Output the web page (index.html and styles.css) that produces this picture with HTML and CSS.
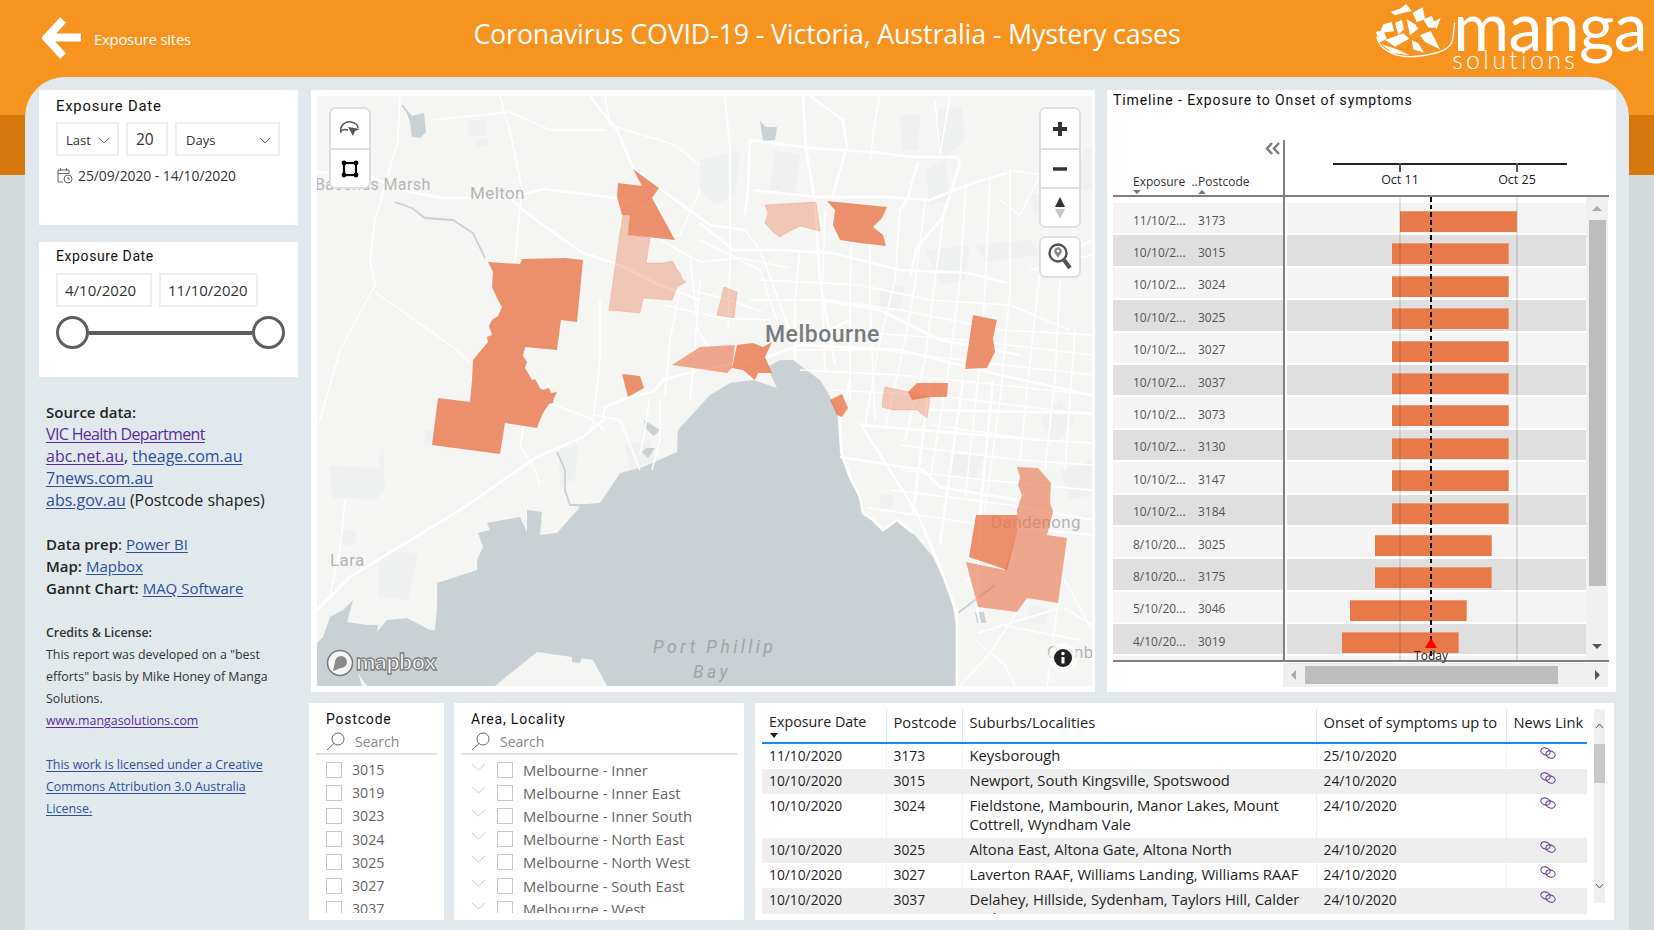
FILE: index.html
```html
<!DOCTYPE html>
<html lang="en">
<head>
<meta charset="utf-8">
<title>Coronavirus COVID-19 - Victoria, Australia - Mystery cases</title>
<link rel="stylesheet" href="styles.css">
</head>
<body>
<div class="page">
  <header class="top">
    <a class="back">
      <svg class="back-arrow" width="40" height="44" viewBox="0 0 40 44"><path d="M21 3 L4.500 21 L21 39 M5 20.500 H39" fill="none" stroke="#fff" stroke-width="8"/></svg>
      <span>Exposure sites</span>
    </a>
    <h1 class="title">Coronavirus COVID-19 - Victoria, Australia - Mystery cases</h1>
    <div class="logo">
      <svg class="logo-mark" width="88" height="62" viewBox="228 8 264 186">
        <g fill="#fff">
          <polygon points="272,38 300,28 318,14 335,35 305,42 285,48"/>
          <polygon points="338,40 368,24 375,60 350,68"/>
          <polygon points="370,60 395,50 412,85 385,85"/>
          <polygon points="398,70 422,55 410,90"/>
          <polygon points="285,70 305,62 312,90 295,106"/>
          <polygon points="250,75 275,68 282,96 240,100"/>
          <polygon points="228,98 250,92 260,118 238,130"/>
          <polygon points="320,60 345,75 355,88 330,108"/>
          <polygon points="360,108 392,95 420,150 375,128"/>
          <polygon points="255,122 310,102 328,118 285,142"/>
          <polygon points="245,135 290,150 330,168 275,160"/>
          <polygon points="335,122 355,132 372,160 340,150"/>
        </g>
        <path d="M230 112 C240 160 300 178 360 170 C420 162 452 150 458 120 L464 70" fill="none" stroke="#fff" stroke-width="4"/>
      </svg>
      <div class="logo-word">
        <span class="logo-manga">manga</span>
        <span class="logo-sol">solutions</span>
      </div>
    </div>
  </header>

  <main class="board">
    <aside class="side">
      <section class="card">
        <h2 class="card-title big">Exposure Date</h2>
        <div class="box-row">
          <div class="box box-last">Last<svg class="chev" width="12" height="7" viewBox="0 0 12 7"><path d="M1 1 L6 6 L11 1"/></svg></div>
          <div class="box box-num">20</div>
          <div class="box box-days">Days<svg class="chev" width="12" height="7" viewBox="0 0 12 7"><path d="M1 1 L6 6 L11 1"/></svg></div>
        </div>
        <div class="range">
          <svg width="16" height="17" viewBox="0 0 16 17" class="cal"><path d="M1 15 V3 H12 V7 M1 6.500 H12 M3.500 1 V4 M9.500 1 V4 M1 15 H6" fill="none" stroke="#666"/><circle cx="11" cy="12" r="4" fill="#fff" stroke="#666"/><path d="M11 10 V12 H13" fill="none" stroke="#666"/></svg>
          <span>25/09/2020 - 14/10/2020</span>
        </div>
      </section>
      <section class="card card-two">
        <h2 class="card-title">Exposure Date</h2>
        <div class="box-row">
          <div class="box box-date">4/10/2020</div>
          <div class="box box-date">11/10/2020</div>
        </div>
        <div class="slider"><span class="knob"></span><span class="track"></span><span class="knob"></span></div>
      </section>
      <div class="notes">
        <p class="src"><b>Source data:</b><br>
        <a class="seen tight">VIC Health Department</a><br>
        <a class="seen">abc.net.au</a>, <a>theage.com.au</a><br>
        <a>7news.com.au</a><br>
        <a>abs.gov.au</a> (Postcode shapes)</p>
        <p><b>Data prep</b>: <a>Power BI</a><br>
        <b>Map:</b> <a>Mapbox</a><br>
        <b>Gannt Chart:</b> <a>MAQ Software</a></p>
        <p class="small"><b>Credits &amp; License:</b><br>
        This report was developed on a "best efforts" basis by Mike Honey of Manga Solutions.<br>
        <a class="seen">www.mangasolutions.com</a></p>
        <p class="small"><a>This work is licensed under a Creative Commons Attribution 3.0 Australia License.</a></p>
      </div>
    </aside>

    <div class="content">
      <div class="upper">
        <section class="map-card">
          <div class="map">
            <svg class="map-svg" width="775" height="590" viewBox="317 96 775 590">
              <rect class="land" x="317" y="96" width="775" height="590"/>
              <g class="park">
                <polygon points="468,120 486,120 486,136 468,136"/>
                <polygon points="475,140 488,138 488,146 475,147"/>
                <polygon points="1085,150 1092,150 1092,190 1075,190 1080,165"/>
                <polygon points="900,115 920,115 918,150 902,150"/>
                <polygon points="938,110 962,106 965,140 945,158 938,140"/>
                <polygon points="925,170 945,160 950,200 930,205"/>
                <polygon points="700,160 740,150 735,195 715,205 700,190"/>
                <polygon points="775,150 800,155 795,195 770,190"/>
                <polygon points="925,250 970,245 965,280 940,285"/>
                <polygon points="975,245 1030,240 1040,255 985,262"/>
                <polygon points="880,290 905,285 900,310 880,308"/>
                <polygon points="330,466 380,468 378,500 332,498"/>
                <polygon points="380,456 383,445 385,490 375,498"/>
                <polygon points="380,552 418,553 408,600 378,597"/>
                <polygon points="340,530 356,530 356,545 340,545"/>
                <polygon points="425,430 443,430 443,445 425,445"/>
                <polygon points="558,450 578,445 575,480 560,485"/>
                <polygon points="625,445 650,440 655,460 630,470"/>
                <polygon points="880,495 893,495 893,508 880,508"/>
                <polygon points="1040,420 1060,400 1075,420 1055,445"/>
                <polygon points="1060,470 1092,460 1092,495 1070,500"/>
                <polygon points="1030,605 1050,610 1045,625 1025,622"/>
                <polygon points="950,455 985,455 975,480 950,475"/>
                <polygon points="1032,195 1060,190 1055,215 1035,215"/>
              </g>
              <path class="water" d="M710 395 L678 430 L677 452 L643 467 L620 473 L600 503 L573 505 L580 507 L557 533 L540 535 L542 512 L527 510 L527 532 L520 517 L487 523 L490 530 L478 533 L483 547 L477 560 L477 570 L437 583 L437 607 L435 630 L430 630 L407 618 L387 620 L377 632 L378 625 L367 625 L347 622 L353 600 L343 610 L330 617 L323 637 L317 643 L317 686 L362 686 L358 673 L367 686 L495 686 L537 652 L593 660 L607 686 L957 686 L957 630 L950 593 L933 557 L913 533 L897 520 L883 530 L873 520 L863 513 L860 497 L850 477 L840 453 L838 423 L837 410 L828 393 L820 380 L793 360 L780 360 L767 367 L777 388 L753 380 L730 383 Z"/>
              <g class="lake">
                <path d="M405 108 L412 116 L424 113 L426 132 L420 138 L412 137 L410 122Z"/>
                <path d="M760 121 L766 127 L777 127 L775 140 L763 141Z"/>
                <path d="M644 420 L660 430 L654 436 L645 428Z"/>
                <path d="M646 448 L655 448 L648 458 L642 452Z"/>
                <path d="M433 664 L436 668 L433 671Z"/>
                <path d="M572 655 L582 655 L580 663 L572 662Z"/>
                <path d="M975 612 L984 612 L986 623 L977 623Z"/>
              </g>
              <g class="river">
                <path d="M402 105 L412 118 M395 202 L412 208 L425 218 L453 220 L473 233 L485 258"/>
                <path d="M557 452 L565 470 L565 490 L570 505 L585 505"/>
                <path d="M958 613 L975 600 L995 585"/>
              </g>
              <g class="road">
                <path d="M400 96 L398 140 L375 220 L370 260 L375 285 L340 350 L320 420"/>
                <path d="M375 292 L450 345 L470 362"/>
                <path d="M500 96 L512 140 L522 190 L515 260"/>
                <path d="M433 120 L510 112 L550 130 L605 130"/>
                <path d="M605 96 L610 125 L675 145 L700 165"/>
                <path d="M620 225 L640 240 L680 235 L700 190"/>
                <path d="M600 300 L600 360 L592 430"/>
                <path d="M525 420 L520 445 L535 470 L540 485"/>
                <path d="M330 596 L340 550 L345 500"/>
                <path d="M593 415 L620 420 L640 470"/>
                <path d="M540 400 L590 418 L605 430"/>
                <path d="M650 396 L645 430 L640 455"/>
                <path d="M660 400 L660 440 L652 470"/>
                <path d="M680 290 L670 340 L665 395"/>
                <path d="M700 280 L695 345 L690 400"/>
                <path d="M725 96 L730 150 L730 260 L728 330"/>
                <path d="M700 240 L760 270 L780 330"/>
                <path d="M745 230 L760 250 L795 345"/>
                <path d="M800 250 L795 300 L795 360"/>
                <path d="M825 210 L822 300 L825 370"/>
                <path d="M851 245 L850 300 L850 400"/>
                <path d="M870 240 L870 300 L875 420"/>
                <path d="M900 210 L895 280 L880 340 L865 425"/>
                <path d="M925 200 L915 285 L905 340 L885 430"/>
                <path d="M945 205 L935 280 L925 360 L905 440"/>
                <path d="M966 185 L960 280 L950 360 L930 480"/>
                <path d="M990 180 L985 290 L980 360 L965 500"/>
                <path d="M1010 170 L1010 290 L1000 400 L985 510"/>
                <path d="M1040 270 L1030 360 L1020 460"/>
                <path d="M1060 280 L1055 380 L1045 470"/>
                <path d="M1075 330 L1070 400 L1065 470"/>
                <path d="M750 300 L830 300 L900 310 L1000 330 L1092 335"/>
                <path d="M760 280 L860 285 L930 300 L1010 305 L1070 330"/>
                <path d="M790 330 L900 335 L965 340 L1092 355"/>
                <path d="M790 350 L880 350 L960 360 L1092 375"/>
                <path d="M800 370 L900 375 L1000 385 L1092 395"/>
                <path d="M830 390 L930 395 L1092 415"/>
                <path d="M930 425 L1040 440 L1092 443"/>
                <path d="M900 445 L1020 460 L1092 465"/>
                <path d="M900 470 L985 480 L1092 490"/>
                <path d="M890 490 L1010 505 L1092 520"/>
                <path d="M867 508 L973 523 L1092 535"/>
                <path d="M1063 577 L1092 630"/>
                <path d="M978 633 L1063 607 L1092 625"/>
                <path d="M966 580 L1000 560 L1050 560"/>
                <path d="M1017 612 L990 653 L960 686"/>
                <path d="M1058 603 L1047 686"/>
                <path d="M975 640 L1005 665 L1015 686"/>
                <path d="M1000 625 L1080 640"/>
                <path d="M1060 260 L1092 240"/>
                <path d="M1030 270 L1092 255"/>
                <path d="M870 160 L875 120 L880 96"/>
                <path d="M935 100 L940 155 L950 96"/>
                <path d="M1010 170 L1040 175 L1020 215 L1000 200"/>
                <path d="M660 240 L700 262 L740 258 L790 268"/>
                <path d="M690 290 L730 300 L762 312"/>
                <path d="M690 255 L698 330 L710 350"/>
                <path d="M665 305 L720 318 L770 320"/>
              </g>
              <g class="road-major">
                <path d="M317 172 L370 176 L400 190 L443 198 L510 198 L523 210 L550 230 L583 253 L617 264 L660 285 L700 300"/>
                <path d="M510 198 L543 189 L617 198 L655 210"/>
                <path d="M590 96 L603 113 L617 130 L633 168 L659 188 L710 225 L745 230"/>
                <path d="M317 610 L330 597 L350 577 L460 510 L537 457 L583 437 L603 420 L605 407 L630 397 L653 392 L663 380 L700 370 L765 358 L800 345 L850 320"/>
                <path d="M803 96 L806 150 L815 200 L820 280 L830 335 L835 365"/>
                <path d="M810 96 L843 120 L847 147 L837 180 L832 200"/>
                <path d="M750 140 L810 148 L873 152 L913 157 L957 157"/>
                <path d="M750 140 L748 190 L745 215"/>
                <path d="M753 190 L817 197 L887 197 L930 200 L973 183 L1007 173"/>
                <path d="M700 223 L733 250 L777 250 L833 253 L900 270 L967 273 L1007 283"/>
                <path d="M957 157 L960 163 L943 217 L917 247 L910 277"/>
                <path d="M900 210 L908 197 L918 162"/>
                <path d="M850 380 L840 423 L842 455 L850 477 L860 497 L863 513 L873 520 L883 530 L897 520 L913 533"/>
                <path d="M860 423 L917 513 L940 567 L957 613 L957 686"/>
                <path d="M930 380 L913 513"/>
                <path d="M963 380 L940 543"/>
                <path d="M993 380 L980 513 L977 610 L980 623"/>
                <path d="M840 457 L923 470 L940 487 L1017 500"/>
                <path d="M860 425 L1040 440"/>
                <path d="M930 410 L1092 413"/>
                <path d="M800 345 L900 350 L1000 375 L1092 395"/>
                <path d="M820 300 L880 310 L940 340 L1020 355"/>
              </g>
              <g class="label">
                <text x="315" y="190" class="lb-18">Bacchus Marsh</text>
                <text x="470" y="199" class="lb-17">Melton</text>
                <text x="330" y="566" class="lb-17">Lara</text>
                <text x="991" y="528" class="lb-17 lb-wide">Dandenong</text>
                <text x="1047" y="658" class="lb-17">Cranb</text>
              </g>
              <g class="zones">
                <polygon class="z-strong" points="488,262 520,264 522,259 565,258 583,260 577,322 561,320 557,350 525,347 523,356 527,362 525,368 532,380 535,379 540,388 543,390 549,388 551,393 557,392 554,398 553,403 549,404 545,410 542,415 537,428 505,423 500,454 432,445 438,398 470,402 472,380 473,360 488,342 487,337 492,335 489,326 492,320 498,316 502,307 498,300 496,296 492,287 493,272"/>
                <polygon class="z-strong" points="633,169 659,188 652,198 675,240 628,235 630,215 622,215 617,197 618,183 642,186"/>
                <polygon class="z-light" points="623,215 630,215 628,235 650,238 646,263 662,263 673,261 676,268 680,273 682,279 686,282 677,287 672,300 643,298 640,313 609,310 620,233"/>
                <polygon class="z-light" points="765,205 816,202 820,231 800,226 792,230 783,235 780,237 773,232 765,223 768,213"/>
                <polygon class="z-strong" points="827,201 887,207 882,218 873,227 883,235 886,246 860,243 840,240 833,225 835,210"/>
                <polygon class="z-light" points="724,287 737,292 734,318 717,315"/>
                <polygon class="z-mid" points="672,365 700,347 735,345 732,368 727,373 700,369"/>
                <polygon class="z-strong" points="737,345 753,343 763,347 772,342 765,357 772,373 758,373 755,380 743,370 732,368"/>
                <polygon class="z-strong" points="973,315 997,320 993,338 995,352 987,368 965,369"/>
                <polygon class="z-strong" points="622,374 640,376 644,388 628,397"/>
                <polygon class="z-strong" points="830,400 842,394 848,408 842,417 837,415"/>
                <polygon class="z-light" points="885,387 908,392 930,397 927,418 917,410 893,410 882,407 883,397"/>
                <polygon class="z-strong" points="908,392 917,383 940,383 948,383 947,397 930,397 912,400"/>
                <polygon class="z-mid" points="1017,467 1038,468 1051,483 1050,503 1053,512 1047,535 1067,538 1058,603 1027,598 1017,612 978,607 966,562 1005,570 1017,532 1017,510 1022,495 1018,485 1020,477"/>
                <polygon class="z-strong" points="976,515 1017,515 1017,532 1007,570 969,557"/>
              </g>
              <g class="label">
                <text x="765" y="342" class="lb-city">Melbourne</text>
                <text x="653" y="653" class="lb-bay">Port Phillip</text>
                <text x="693" y="678" class="lb-bay">Bay</text>
              </g>
              <g class="mapbox">
                <circle cx="340" cy="663" r="12.500" fill="#fff" fill-opacity=".8" stroke="#777" stroke-width="1.500"/>
                <path d="M333 671 L335 662 A6 6 0 1 1 341 668 Z" fill="#8a8a8a"/>
                <text x="356" y="670" class="mapbox-word">mapbox</text>
              </g>
              <circle cx="1063" cy="658" r="15" fill="#fff" fill-opacity=".6"/>
              <circle cx="1063" cy="658" r="9" fill="#222"/>
              <rect x="1061.500" y="657" width="3" height="6.500" fill="#fff"/>
              <circle cx="1063" cy="653.500" r="1.700" fill="#fff"/>
            </svg>
            <div class="ctrl ctrl-left">
              <button class="ctrl-btn">
                <svg width="24" height="20" viewBox="0 0 24 20"><path d="M3 14 C1 6 8 2 13 3 C18 4 20 7 20 9 M3 12 C6 9 9 11 10 11" fill="none" stroke="#555" stroke-width="1.500"/><path d="M10 8 L22 10 L17 12 L15 17Z" fill="#555"/></svg>
              </button>
              <button class="ctrl-btn">
                <svg width="18" height="18" viewBox="0 0 18 18"><rect x="3" y="3" width="12" height="12" fill="none" stroke="#000" stroke-width="2.200"/><g fill="#000"><circle cx="3" cy="3" r="2.400"/><circle cx="15" cy="3" r="2.400"/><circle cx="3" cy="15" r="2.400"/><circle cx="15" cy="15" r="2.400"/></g></svg>
              </button>
            </div>
            <div class="ctrl ctrl-right">
              <button class="ctrl-btn"><svg width="18" height="18" viewBox="0 0 18 18"><path d="M9 2 V16 M2 9 H16" stroke="#333" stroke-width="4" fill="none"/></svg></button>
              <button class="ctrl-btn ctrl-short"><svg width="18" height="6" viewBox="0 0 18 6"><path d="M2 3 H16" stroke="#333" stroke-width="3.500" fill="none"/></svg></button>
              <button class="ctrl-btn ctrl-compass"><svg width="14" height="24" viewBox="0 0 14 24"><path d="M7 1 L12 11 H2Z" fill="#333"/><path d="M7 23 L12 13 H2Z" fill="#c8c8c8"/></svg></button>
            </div>
            <div class="ctrl ctrl-find">
              <button class="ctrl-btn"><svg width="24" height="28" viewBox="0 0 24 28"><circle cx="10" cy="10" r="8.500" fill="none" stroke="#555" stroke-width="2.400"/><path d="M16 17 L22 25" stroke="#555" stroke-width="4"/><path d="M10 15 L6.500 9.500 A3.800 3.800 0 1 1 13.500 9.500Z" fill="#888"/><circle cx="10" cy="8" r="1.300" fill="#fff"/></svg></button>
            </div>
          </div>
        </section>

        <section class="gantt">
          <h2 class="gantt-title">Timeline - Exposure to Onset of symptoms</h2>
          <div class="gantt-wrap">
            <div class="gantt-head">
              <div class="head-left">
                <svg class="collapse" width="15" height="13" viewBox="0 0 15 13"><path d="M7 1 L2 6.500 L7 12 M14 1 L9 6.500 L14 12" fill="none" stroke="#808080" stroke-width="2.600"/></svg>
                <div class="head-labels">
                  <div class="head-col"><span>Exposure&nbsp;&nbsp;..</span><i class="sort-down"></i></div>
                  <div class="head-col"><span>Postcode</span><i class="sort-up"></i></div>
                </div>
              </div>
              <div class="axis">
                <div class="axis-line"></div>
                <div class="tick tick-a"><span>Oct 11</span></div>
                <div class="tick tick-b"><span>Oct 25</span></div>
              </div>
            </div>
            <div class="gantt-body">
              <div class="rows">
                <div class="row"><div class="cell-text"><span>11/10/2...</span><span>3173</span></div><div class="cell-chart"><div class="bar" style="margin-left:113px"></div></div></div>
                <div class="row"><div class="cell-text"><span>10/10/2...</span><span>3015</span></div><div class="cell-chart"><div class="bar" style="margin-left:105px"></div></div></div>
                <div class="row"><div class="cell-text"><span>10/10/2...</span><span>3024</span></div><div class="cell-chart"><div class="bar" style="margin-left:105px"></div></div></div>
                <div class="row"><div class="cell-text"><span>10/10/2...</span><span>3025</span></div><div class="cell-chart"><div class="bar" style="margin-left:105px"></div></div></div>
                <div class="row"><div class="cell-text"><span>10/10/2...</span><span>3027</span></div><div class="cell-chart"><div class="bar" style="margin-left:105px"></div></div></div>
                <div class="row"><div class="cell-text"><span>10/10/2...</span><span>3037</span></div><div class="cell-chart"><div class="bar" style="margin-left:105px"></div></div></div>
                <div class="row"><div class="cell-text"><span>10/10/2...</span><span>3073</span></div><div class="cell-chart"><div class="bar" style="margin-left:105px"></div></div></div>
                <div class="row"><div class="cell-text"><span>10/10/2...</span><span>3130</span></div><div class="cell-chart"><div class="bar" style="margin-left:105px"></div></div></div>
                <div class="row"><div class="cell-text"><span>10/10/2...</span><span>3147</span></div><div class="cell-chart"><div class="bar" style="margin-left:105px"></div></div></div>
                <div class="row"><div class="cell-text"><span>10/10/2...</span><span>3184</span></div><div class="cell-chart"><div class="bar" style="margin-left:105px"></div></div></div>
                <div class="row"><div class="cell-text"><span>8/10/20...</span><span>3025</span></div><div class="cell-chart"><div class="bar" style="margin-left:88px"></div></div></div>
                <div class="row"><div class="cell-text"><span>8/10/20...</span><span>3175</span></div><div class="cell-chart"><div class="bar" style="margin-left:88px"></div></div></div>
                <div class="row"><div class="cell-text"><span>5/10/20...</span><span>3046</span></div><div class="cell-chart"><div class="bar" style="margin-left:63px"></div></div></div>
                <div class="row"><div class="cell-text"><span>4/10/20...</span><span>3019</span></div><div class="cell-chart"><div class="bar" style="margin-left:55px"></div></div></div>
                <div class="row"><div class="cell-text"></div><div class="cell-chart"></div></div>
              </div>
              <div class="vscroll"><i class="arrow-up"></i><div class="vthumb"></div><i class="arrow-down"></i></div>
            </div>
            <div class="divider"></div>
            <div class="gridline grid-a"></div>
            <div class="gridline grid-b"></div>
            <div class="today"></div>
            <div class="today-mark"></div>
            <div class="today-label">Today</div>
          </div>
          <div class="gantt-foot">
            <div class="hscroll"><i class="arrow-left"></i><div class="hthumb"></div><i class="arrow-right"></i></div>
          </div>
        </section>
      </div>

      <div class="lower">
        <section class="slicer">
          <h2 class="slicer-title">Postcode</h2>
          <div class="search">
            <svg width="19" height="19" viewBox="0 0 19 19"><circle cx="12" cy="7" r="6" fill="none" stroke="#666"/><path d="M8 11.500 L1 18" stroke="#666" fill="none"/></svg>
            <span>Search</span>
          </div>
          <ul class="items">
            <li><i class="check"></i>3015</li>
            <li><i class="check"></i>3019</li>
            <li><i class="check"></i>3023</li>
            <li><i class="check"></i>3024</li>
            <li><i class="check"></i>3025</li>
            <li><i class="check"></i>3027</li>
            <li><i class="check"></i>3037</li>
          </ul>
        </section>
        <section class="slicer">
          <h2 class="slicer-title">Area, Locality</h2>
          <div class="search">
            <svg width="19" height="19" viewBox="0 0 19 19"><circle cx="12" cy="7" r="6" fill="none" stroke="#666"/><path d="M8 11.500 L1 18" stroke="#666" fill="none"/></svg>
            <span>Search</span>
          </div>
          <ul class="items items-tree">
            <li><svg class="tw" width="15" height="8" viewBox="0 0 15 8"><path d="M1 1 L7.500 7 L14 1"/></svg><i class="check"></i>Melbourne - Inner</li>
            <li><svg class="tw" width="15" height="8" viewBox="0 0 15 8"><path d="M1 1 L7.500 7 L14 1"/></svg><i class="check"></i>Melbourne - Inner East</li>
            <li><svg class="tw" width="15" height="8" viewBox="0 0 15 8"><path d="M1 1 L7.500 7 L14 1"/></svg><i class="check"></i>Melbourne - Inner South</li>
            <li><svg class="tw" width="15" height="8" viewBox="0 0 15 8"><path d="M1 1 L7.500 7 L14 1"/></svg><i class="check"></i>Melbourne - North East</li>
            <li><svg class="tw" width="15" height="8" viewBox="0 0 15 8"><path d="M1 1 L7.500 7 L14 1"/></svg><i class="check"></i>Melbourne - North West</li>
            <li><svg class="tw" width="15" height="8" viewBox="0 0 15 8"><path d="M1 1 L7.500 7 L14 1"/></svg><i class="check"></i>Melbourne - South East</li>
            <li><svg class="tw" width="15" height="8" viewBox="0 0 15 8"><path d="M1 1 L7.500 7 L14 1"/></svg><i class="check"></i>Melbourne - West</li>
          </ul>
        </section>
        <section class="table-card">
          <div class="table-clip">
            <table class="cases">
              <colgroup><col class="c1"><col class="c2"><col class="c3"><col class="c4"><col class="c5"></colgroup>
              <thead>
                <tr><th>Exposure Date<i class="sort-table"></i></th><th>Postcode</th><th>Suburbs/Localities</th><th>Onset of symptoms up to</th><th>News Link</th></tr>
              </thead>
              <tbody>
                <tr><td>11/10/2020</td><td>3173</td><td class="wide">Keysborough</td><td>25/10/2020</td><td><svg class="link" width="18" height="12" viewBox="0 0 18 12"><g fill="none" stroke="#5c2d91"><ellipse cx="6.500" cy="4.500" rx="4.800" ry="3.500" transform="rotate(20 6.500 4.500)"/><ellipse cx="11.500" cy="7.500" rx="4.800" ry="3.500" transform="rotate(20 11.500 7.500)"/></g></svg></td></tr>
                <tr><td>10/10/2020</td><td>3015</td><td class="wide">Newport, South Kingsville, Spotswood</td><td>24/10/2020</td><td><svg class="link" width="18" height="12" viewBox="0 0 18 12"><g fill="none" stroke="#5c2d91"><ellipse cx="6.500" cy="4.500" rx="4.800" ry="3.500" transform="rotate(20 6.500 4.500)"/><ellipse cx="11.500" cy="7.500" rx="4.800" ry="3.500" transform="rotate(20 11.500 7.500)"/></g></svg></td></tr>
                <tr><td>10/10/2020</td><td>3024</td><td class="wide">Fieldstone, Mambourin, Manor Lakes, Mount<br>Cottrell, Wyndham Vale</td><td>24/10/2020</td><td><svg class="link" width="18" height="12" viewBox="0 0 18 12"><g fill="none" stroke="#5c2d91"><ellipse cx="6.500" cy="4.500" rx="4.800" ry="3.500" transform="rotate(20 6.500 4.500)"/><ellipse cx="11.500" cy="7.500" rx="4.800" ry="3.500" transform="rotate(20 11.500 7.500)"/></g></svg></td></tr>
                <tr><td>10/10/2020</td><td>3025</td><td class="wide">Altona East, Altona Gate, Altona North</td><td>24/10/2020</td><td><svg class="link" width="18" height="12" viewBox="0 0 18 12"><g fill="none" stroke="#5c2d91"><ellipse cx="6.500" cy="4.500" rx="4.800" ry="3.500" transform="rotate(20 6.500 4.500)"/><ellipse cx="11.500" cy="7.500" rx="4.800" ry="3.500" transform="rotate(20 11.500 7.500)"/></g></svg></td></tr>
                <tr><td>10/10/2020</td><td>3027</td><td class="wide">Laverton RAAF, Williams Landing, Williams RAAF</td><td>24/10/2020</td><td><svg class="link" width="18" height="12" viewBox="0 0 18 12"><g fill="none" stroke="#5c2d91"><ellipse cx="6.500" cy="4.500" rx="4.800" ry="3.500" transform="rotate(20 6.500 4.500)"/><ellipse cx="11.500" cy="7.500" rx="4.800" ry="3.500" transform="rotate(20 11.500 7.500)"/></g></svg></td></tr>
                <tr><td>10/10/2020</td><td>3037</td><td class="wide">Delahey, Hillside, Sydenham, Taylors Hill, Calder<br>Park</td><td>24/10/2020</td><td><svg class="link" width="18" height="12" viewBox="0 0 18 12"><g fill="none" stroke="#5c2d91"><ellipse cx="6.500" cy="4.500" rx="4.800" ry="3.500" transform="rotate(20 6.500 4.500)"/><ellipse cx="11.500" cy="7.500" rx="4.800" ry="3.500" transform="rotate(20 11.500 7.500)"/></g></svg></td></tr>
              </tbody>
            </table>
          </div>
          <div class="table-scroll">
            <svg class="tchev" width="9" height="6" viewBox="0 0 9 6"><path d="M1 5 L4.500 1 L8 5"/></svg>
            <div class="tthumb"></div>
            <svg class="tchev tchev-down" width="9" height="6" viewBox="0 0 9 6"><path d="M1 1 L4.500 5 L8 1"/></svg>
          </div>
        </section>
      </div>
    </div>
  </main>
</div>
</body>
</html>
```
FILE: styles.css
```css
* { box-sizing: border-box; }
html, body { margin: 0; padding: 0; }
body { font-family: "Open Sans", "Noto Sans", sans-serif; color: #252423; }
h1, h2, p, ul { margin: 0; padding: 0; }
ul { list-style: none; }
button { padding: 0; border: 0; background: #fff; font: inherit; }

.page {
  width: 1654px; height: 930px; overflow: hidden;
  background: linear-gradient(#f7941f 0 115px, #d6760c 115px 175px, #d2dadc 175px);
}

/* header */
.top {
  height: 77px; background: #f7941f; color: #fff;
  display: grid; grid-template-columns: 1fr auto 1fr; align-items: start;
}
.back { display: flex; align-items: center; gap: 12px; padding: 17px 0 0 42px; font-size: 14.800px; letter-spacing: -.2px; }
.back-arrow { flex: none; }
.title { font-size: 26.800px; font-weight: 400; line-height: 34px; padding-top: 17px; letter-spacing: -.15px; white-space: nowrap; }
.logo { justify-self: end; display: flex; align-items: flex-start; padding-right: 7px; }
.logo-mark { flex: none; margin-top: 2px; margin-right: -11px; }
.logo-word { display: flex; flex-direction: column; font-family: "Lato", sans-serif; margin-top: -3px; }
.logo-manga { font-size: 68px; line-height: 56px; letter-spacing: -.6px; font-weight: 400; }
.logo-sol { font-size: 25px; line-height: 20px; letter-spacing: 3.300px; margin: -4px 0 0 -1px; font-weight: 300; }

/* board */
.board {
  height: 853px; margin: 0 25px; padding: 13px 13px 0 14px;
  background: #e1e9ec; border-radius: 40px 40px 0 0;
  display: grid; grid-template-columns: 259px 1305px; column-gap: 13px; align-items: start;
}

/* sidebar */
.side { display: flex; flex-direction: column; }
.card { height: 135px; background: #fff; padding: 6px 17px 0; }
.card-two { margin-top: 17px; padding-top: 4px; }
.card-title { font: 400 14px/20px "Roboto", sans-serif; letter-spacing: .6px; color: #111; }
.card-title.big { font-size: 14.800px; letter-spacing: .8px; }
.box-row { display: flex; gap: 7px; margin-top: 6px; }
.box {
  height: 34px; border: 2px solid #eee; display: flex; align-items: center; justify-content: space-between;
  font-size: 13px; color: #333; padding-top: 2px;
}
.card-two .box-row { margin-top: 7px; }
.card-two .box { padding-top: 0; }
.box-last { width: 63px; padding: 2px 7px 0 8px; }
.box-num { width: 42px; padding-left: 8px; font-size: 15.500px; padding-top: 0; }
.box-days { width: 105px; padding: 2px 7px 0 9px; }
.box-date { padding-left: 7px; font-size: 15px; }
.box-date:first-child { width: 96px; }
.box-date:last-child { width: 99px; }
.chev { fill: none; stroke: #666; }
.range { display: flex; align-items: center; gap: 5px; margin-top: 10px; font-size: 13.900px; color: #333; letter-spacing: -.05px; padding-left: 1px; white-space: nowrap; }
.slider { display: flex; align-items: center; margin-top: 9px; width: 229px; }
.knob { width: 33px; height: 33px; border-radius: 50%; background: #fff; border: 3px solid #605e5c; flex: none; }
.track { flex: 1; height: 4px; background: #605e5c; }

.notes { margin-top: 24px; padding-left: 7px; font-size: 15px; line-height: 22px; color: #252423; width: 246px; letter-spacing: 0; }
.notes p { margin-bottom: 22px; }
.notes p.src { font-size: 16px; }
.notes p.src b { font-size: 15px; }
.notes a { color: #2c4fa0; text-decoration: underline; text-underline-offset: 2px; }
.notes a.seen { color: #5b2a9e; }
.notes a.tight { letter-spacing: -.65px; }
.notes b { font-weight: 600; }
.notes .small { font-size: 12.400px; color: #333; width: 232px; padding-top: 1px; margin-bottom: 21px; }

/* content */
.content { display: flex; flex-direction: column; }
.upper { display: grid; grid-template-columns: 784px 509px; column-gap: 12px; height: 602px; }
.lower { display: grid; grid-template-columns: 135px 290px 860px; column-gap: 10px; height: 217px; margin: 11px 0 0 -2px; }

/* map */
.map-card { background: #fff; padding: 6px 3px 6px 6px; height: 602px; }
.map { position: relative; width: 775px; height: 590px; overflow: hidden; }
.map-svg { display: block; }
.land { fill: #f5f5f3; }
.water { fill: #c9d1d4; }
.lake path { fill: #c9d1d4; }
.river path { fill: none; stroke: #c9d1d4; stroke-width: 1.800; }
.park polygon { fill: #eff1f0; }
.road path { fill: none; stroke: #fff; stroke-width: 1.500; }
.road-major path { fill: none; stroke: #fff; stroke-width: 2.600; }
.label text { font-family: "Roboto", sans-serif; fill: #b3b5b5; }
.lb-18 { font-size: 16px; letter-spacing: .4px; }
.lb-17 { font-size: 17px; letter-spacing: .4px; }
.lb-wide { letter-spacing: .4px; }
.label .lb-city { font-size: 23px; font-weight: 500; fill: #767c7e; letter-spacing: .5px; }
.label .lb-bay { font-size: 17.500px; font-style: italic; fill: #9ca6a9; letter-spacing: 3.400px; }
.z-strong { fill: #e8754a; fill-opacity: .8; }
.z-mid { fill: #e8754a; fill-opacity: .62; }
.z-light { fill: #e8754a; fill-opacity: .36; stroke: #e8754a; stroke-opacity: .25; }
.mapbox-word { font-family: "Lato", sans-serif; font-size: 23px; font-weight: 900; fill: #fff; stroke: #7d7d7d; stroke-width: 1.300px; letter-spacing: -.4px; }

.ctrl { position: absolute; width: 42px; border: 2px solid #dedede; border-radius: 7px; background: #fff; overflow: hidden; display: flex; flex-direction: column; }
.ctrl-left { left: 12px; top: 11px; }
.ctrl-right { left: 722px; top: 11px; }
.ctrl-find { left: 722px; top: 140px; }
.ctrl-btn { height: 39px; width: 38px; display: flex; align-items: center; justify-content: center; }
.ctrl-btn + .ctrl-btn { border-top: 2px solid #dedede; }
.ctrl-find .ctrl-btn { height: 38px; }

/* gantt */
.gantt { background: #fff; padding: 0 7px 0 6px; height: 602px; display: flex; flex-direction: column; }
.gantt-title { font: 400 14px/20px "Roboto", sans-serif; letter-spacing: .9px; height: 20px; color: #111; white-space: nowrap; }
.gantt-wrap { position: relative; }
.gantt-head { height: 87px; border-bottom: 2px solid #808080; display: grid; grid-template-columns: 172px 1fr; }
.head-left { display: flex; flex-direction: column; align-items: flex-end; padding-right: 5px; }
.collapse { margin-top: 32px; }
.head-labels { margin-top: auto; align-self: stretch; padding-left: 20px; display: grid; grid-template-columns: 65px 1fr; height: 21px; font-size: 12px; line-height: 16px; color: #333; }
.head-col span { display: block; white-space: nowrap; }
.sort-down, .sort-up { display: block; width: 0; height: 0; border-left: 4px solid transparent; border-right: 4px solid transparent; }
.sort-down { border-top: 4px solid #777; }
.sort-up { border-bottom: 4px solid #777; }
.axis { position: relative; margin: 53px 0 0 48px; width: 234px; height: 32px; }
.axis-line { height: 2px; background: #222; }
.tick { position: absolute; top: 0; width: 2px; height: 9px; background: #555; }
.tick-a { left: 66px; }
.tick-b { left: 183px; }
.tick span { position: absolute; left: 50%; top: 9px; transform: translateX(-50%); font-size: 12.500px; line-height: 16px; white-space: nowrap; color: #222; }

.gantt-body { height: 463px; display: flex; overflow: hidden; }
.rows { width: 473px; padding-top: 6px; display: flex; flex-direction: column; gap: 2px; }
.row { flex: none; height: 30.400px; display: grid; grid-template-columns: 170px 1fr; column-gap: 4px; }
.cell-text { background: #f4f4f4; display: grid; grid-template-columns: 65px 1fr; padding: 4px 0 0 20px; align-items: center; font-size: 12px; color: #555; }
.cell-chart { background: #f4f4f4; padding-top: 8px; }
.row:nth-child(even) .cell-text, .row:nth-child(even) .cell-chart { background: #dfdfdf; }
.bar { width: 117px; height: 21px; background: #e87a4a; border: 1px solid #ee9a75; border-left: 0; border-bottom: 0; }

.vscroll { width: 22px; background: #f0f0f0; display: flex; flex-direction: column; align-items: center; padding-top: 9px; }
.vthumb { width: 17px; height: 366px; background: #bdbdbd; margin-top: 9px; }
.arrow-up { width: 0; height: 0; border: 5px solid transparent; border-top: 0; border-bottom: 5px solid #aaa; }
.arrow-down { width: 0; height: 0; border: 5px solid transparent; border-bottom: 0; border-top: 5px solid #555; margin-top: 58px; }

.divider { position: absolute; left: 170px; top: 30px; bottom: 0; width: 2px; background: #808080; }
.gridline { position: absolute; top: 87px; bottom: 0; width: 2px; background: rgba(0,0,0,.1); }
.grid-a { left: 286px; }
.grid-b { left: 403px; }
.today { position: absolute; left: 316.500px; top: 87px; bottom: 2px; width: 2.800px; background: repeating-linear-gradient(#000 0 4.600px, transparent 4.600px 7.700px); }
.today-mark { position: absolute; left: 312px; top: 528px; width: 12px; height: 10px; background: #f00; clip-path: polygon(50% 0, 100% 100%, 0 100%); }
.today-label { position: absolute; left: 300px; width: 36px; top: 538px; text-align: center; font-size: 12px; line-height: 16px; color: #222; }

.gantt-foot { border-top: 2px solid #808080; padding-left: 170px; padding-top: 1px; }
.hscroll { height: 24px; background: #f0f0f0; display: flex; align-items: center; width: 325px; padding-left: 8px; }
.hthumb { width: 253px; height: 18px; background: #bdbdbd; margin-left: 9px; }
.arrow-left { width: 0; height: 0; border: 5px solid transparent; border-left: 0; border-right: 5px solid #aaa; }
.arrow-right { width: 0; height: 0; border: 5px solid transparent; border-right: 0; border-left: 5px solid #555; margin-left: 37px; }

/* slicers */
.slicer { background: #fff; padding: 6px 7px 0; display: flex; flex-direction: column; height: 217px; }
.slicer-title { font: 400 14px/20px "Roboto", sans-serif; letter-spacing: .8px; padding-left: 10px; color: #111; }
.search { display: flex; align-items: center; gap: 10px; height: 26px; padding-left: 10px; border-bottom: 2px solid #e0e0e0; font-size: 14px; color: #888; }
.search svg { flex: none; }
.items { height: 158px; overflow: hidden; padding-top: 3px; font-size: 14.200px; color: #666; }
.items-tree { font-size: 14.800px; }
.items li { height: 23.200px; display: flex; align-items: center; padding-left: 10px; white-space: nowrap; }
.check { width: 16px; height: 16px; border: 1px solid #c8c8c8; margin-right: 10px; flex: none; }
.tw { flex: none; margin: 0 11px 6px 0; fill: none; stroke: #ccc; }

/* table */
.table-card { background: #fff; padding: 6px 7px; margin-left: 1px; display: flex; gap: 7px; height: 217px; }
.table-clip { width: 825px; height: 205px; overflow: hidden; flex: none; }
.cases { width: 828px; table-layout: fixed; border-collapse: collapse; font-size: 13.800px; line-height: 20px; color: #252423; }
.c1 { width: 124px; } .c2 { width: 76px; } .c3 { width: 354px; } .c4 { width: 190px; } .c5 { width: 84px; }
.cases th { position: relative; height: 34px; padding: 3px 0 0 7px; font-size: 14.700px; font-weight: 400; text-align: left; vertical-align: top; border-bottom: 2px solid #118dff; border-left: 1px solid #d4e8f8; white-space: nowrap; }
.cases th:first-child, .cases td:first-child { border-left: 0; }
.cases th:first-child { font-size: 14.300px; }
.cases td { padding: 2px 7px 3px; vertical-align: top; border-left: 1px solid #f0f0f0; white-space: nowrap; }
.cases td.wide { font-size: 14.800px; line-height: 19px; padding-bottom: 4px; }
.cases tbody tr:nth-child(even) td { background: #eee; }
.cases td:last-child { padding-top: 3px; }
.link { display: block; margin: 0 auto; }
.sort-table { position: absolute; left: 8px; top: 24px; width: 0; height: 0; border: 4.500px solid transparent; border-bottom: 0; border-top: 5px solid #222; }
.table-scroll { width: 11px; height: 194px; background: #f0f0f0; display: flex; flex-direction: column; align-items: center; flex: none; }
.tchev { fill: none; stroke: #555; flex: none; margin-top: 14px; }
.tchev-down { margin-top: 100px; }
.tthumb { width: 11px; height: 39px; background: #c8c8c8; margin-top: 15px; }
```
